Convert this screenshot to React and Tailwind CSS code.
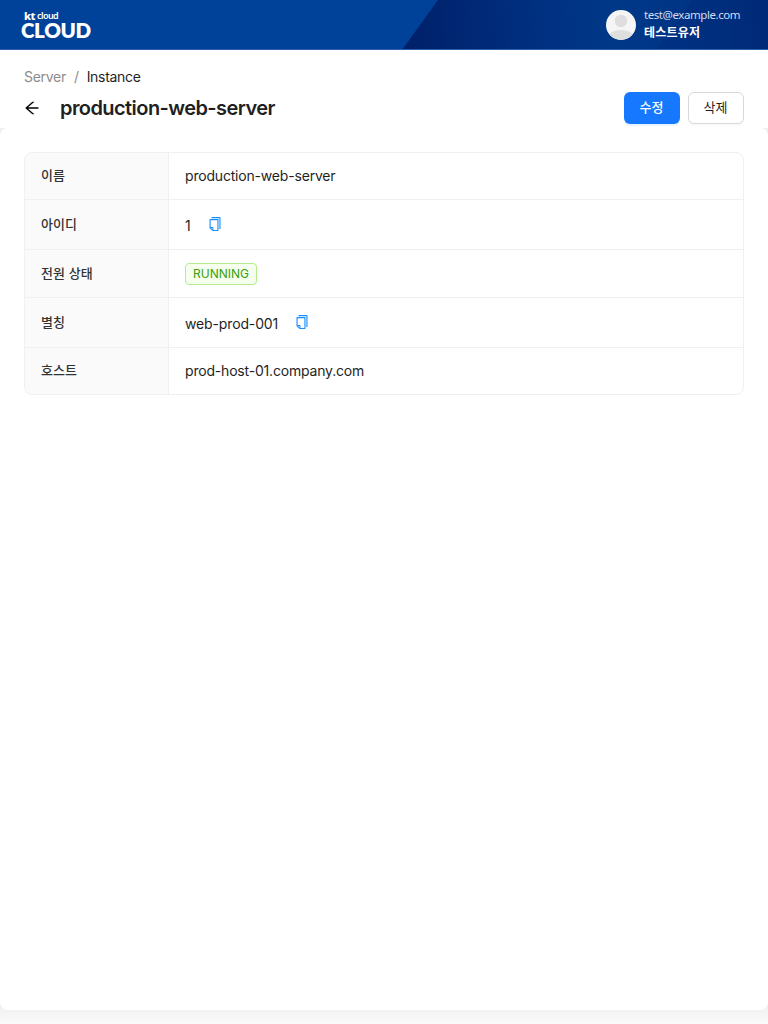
import { AiOutlineArrowLeft, AiOutlineCopy } from "react-icons/ai";

function Header() {
  return (
    <header className="relative flex h-[50px] shrink-0 items-center justify-between overflow-hidden border-b border-[#2a5fab] bg-[#00419a] pr-7 pl-[21px] font-['Noto_Sans','Noto_Sans_CJK_KR',sans-serif] text-white">
      <svg className="absolute inset-0" width="768" height="50" viewBox="0 0 768 50" aria-hidden="true">
        <defs>
          <linearGradient id="band" x1="402" x2="768" y1="30" y2="10" gradientUnits="userSpaceOnUse">
            <stop offset="0" stopColor="#002069" />
            <stop offset="0.35" stopColor="#002f80" />
            <stop offset="0.58" stopColor="#003888" />
            <stop offset="0.75" stopColor="#003586" />
            <stop offset="1" stopColor="#002a74" />
          </linearGradient>
        </defs>
        <path d="M438 0H768V50H402Z" fill="url(#band)" />
        <path d="M692 0H768V50H656Z" fill="#002a7c" fillOpacity=".4" />
      </svg>
      <div className="relative flex flex-col pt-0.5">
        <span className="flex h-[9px] items-center pl-[3px] leading-[9px]">
          <b className="font-['Noto_Sans',sans-serif] text-[11px] leading-[9px] font-extrabold tracking-[-0.5px]">kt</b>
          <span className="ml-[2px] text-[9px] leading-[9px] font-semibold tracking-[-0.55px]">cloud</span>
        </span>
        <span className="mt-px h-[19px] font-['Lato',sans-serif] text-[20.5px] leading-[19px] font-extrabold tracking-[-0.35px]">
          CLOUD
        </span>
      </div>
      <div className="relative flex items-center gap-2">
        <svg width="30" height="30" viewBox="0 0 30 30" aria-hidden="true">
          <clipPath id="avatar">
            <circle cx="15" cy="15" r="15" />
          </clipPath>
          <g clipPath="url(#avatar)">
            <rect width="30" height="30" fill="#f5f5f5" />
            <circle cx="15" cy="11" r="6.2" fill="#dedede" />
            <ellipse cx="15" cy="26" rx="12" ry="6" fill="#dedede" />
          </g>
        </svg>
        <div className="flex w-24 flex-col pb-px whitespace-nowrap">
          <span className="h-[17px] text-[11.5px] leading-[16px] tracking-[-0.43px] text-[#d2ddef]">
            test@example.com
          </span>
          <span className="text-[12px] leading-[18px] font-semibold tracking-[0.2px]">테스트유저</span>
        </div>
      </div>
    </header>
  );
}

function Copyable({ children }) {
  return (
    <span className="flex items-center gap-4 pt-[3px] tracking-[-0.14px]">
      {children}
      <AiOutlineCopy className="mb-[5px] size-4 text-[#1890ff]" />
    </span>
  );
}

function Row({ label, height, last, children }) {
  return (
    <div className={`flex ${height} ${last ? "" : "border-b border-[#f0f0f0]"}`}>
      <div className="flex w-36 shrink-0 items-center border-r border-[#f0f0f0] bg-[#fafafa] pb-px pl-4 text-[13px] font-medium tracking-[0.1px] text-[#333]">
        {label}
      </div>
      <div className="flex grow items-center pl-4 tracking-[-0.19px]">{children}</div>
    </div>
  );
}

export default function App() {
  return (
    <div className="flex h-screen flex-col overflow-hidden bg-white font-['Inter','Noto_Sans_CJK_KR',sans-serif] text-sm text-[#1f1f1f]">
      <Header />
      <div className="h-[78px] shrink-0 bg-white px-6 pt-4">
        <nav className="flex h-[22px] items-center gap-2 leading-[22px] tracking-[-0.3px]">
          <span className="text-[#8c8c8c]">Server</span>
          <span className="text-[#8c8c8c]">/</span>
          <span>Instance</span>
        </nav>
        <div className="mt-1 flex h-8 items-center">
          <AiOutlineArrowLeft className="-ml-px size-[18px] text-black" />
          <h1 className="ml-[19px] text-xl leading-8 font-semibold tracking-[-0.57px]">production-web-server</h1>
          <button className="ml-auto h-8 w-14 rounded-md bg-[#1677ff] pr-px pb-0.5 text-[13px] font-medium text-white shadow-[0_2px_0_rgba(5,145,255,0.1)]">
            수정
          </button>
          <button className="ml-2 h-8 w-14 rounded-md border border-[#d9d9d9] bg-white pr-px pb-0.5 text-[13px] shadow-[0_2px_0_rgba(0,0,0,0.02)]">
            삭제
          </button>
        </div>
      </div>
      <div className="grow bg-linear-to-b from-[#f0f0f0] from-98% to-[#fafafa]">
        <main className="h-[882px] rounded-lg bg-white p-6">
          <div className="overflow-hidden rounded-lg border border-[#f0f0f0]">
            <Row label="이름" height="h-[47px]">production-web-server</Row>
            <Row label="아이디" height="h-[50px]">
              <Copyable>1</Copyable>
            </Row>
            <Row label="전원 상태" height="h-[48px]">
              <span className="h-[22px] rounded border border-[#b7eb8f] bg-[#f6ffed] px-[7px] text-xs leading-5 tracking-normal text-[#389e0d]">
                RUNNING
              </span>
            </Row>
            <Row label="별칭" height="h-[50px]">
              <Copyable>web-prod-001</Copyable>
            </Row>
            <Row label="호스트" height="h-[46px]" last>
              prod-host-01.company.com
            </Row>
          </div>
        </main>
      </div>
    </div>
  );
}
